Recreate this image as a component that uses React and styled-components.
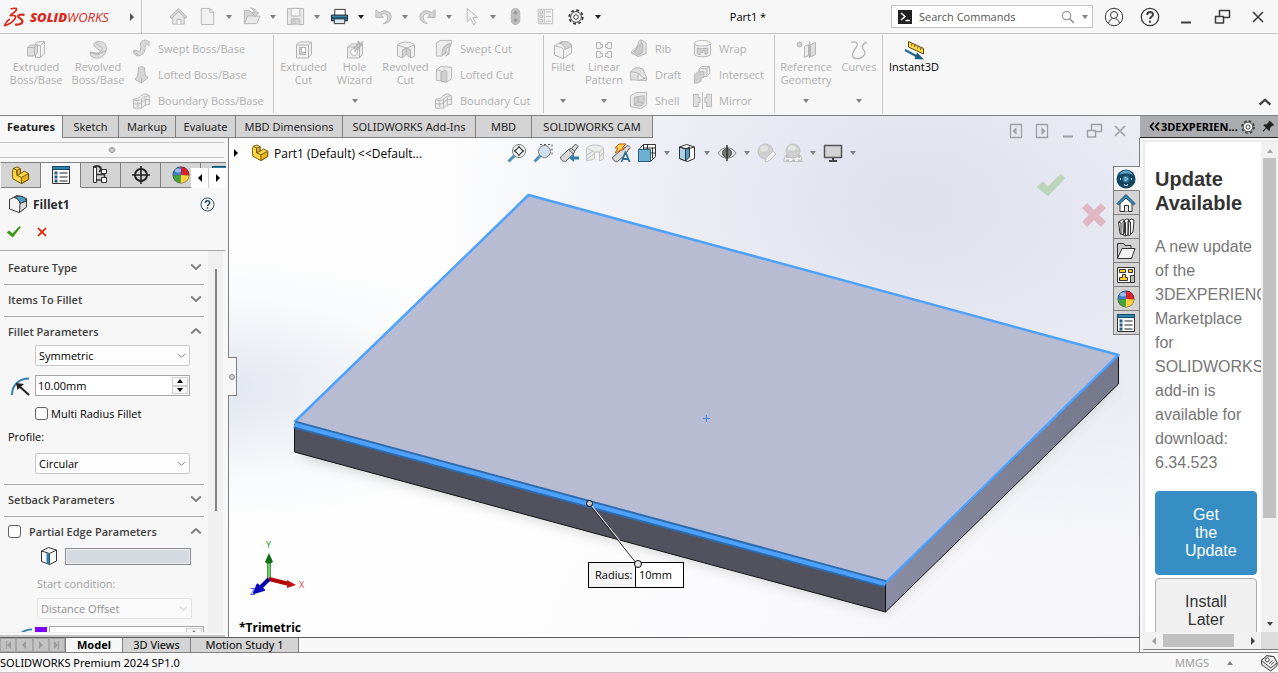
import React from "react";
import styled, { createGlobalStyle, css } from "styled-components";

const sans = `"Open Sans", "Noto Sans", sans-serif`;
const wide = `"Noto Sans", "Open Sans", sans-serif`;
const line = "#808080";
const soft = "#c4c4c4";
const chrome = "#f7f7f7";
const muted = "#b0b0b0";

const GlobalStyle = createGlobalStyle`
  * { box-sizing: border-box; }
  body { margin: 0; background: ${chrome}; font-family: ${sans}; font-size: 11px; color: #000; }
  button, input, select { font: inherit; color: inherit; }
  button { border: 0; padding: 0; background: none; }
  h1, h2, h3, p { margin: 0; }
`;

/* ---------- shell ---------- */
const Shell = styled.div`
  display: flex;
  flex-direction: column;
  height: 100vh;
  background: ${chrome};
  overflow: hidden;
`;
const Body = styled.div`
  flex: 1;
  min-height: 0;
  display: flex;
`;
const Main = styled.main`
  flex: 1;
  min-width: 0;
  display: flex;
  flex-direction: column;
  background:
    radial-gradient(ellipse 42% 66% at 80% 16%, rgba(219, 223, 235, 0.95), rgba(228, 231, 241, 0.7) 50%, rgba(240, 242, 248, 0) 100%),
    radial-gradient(ellipse 30% 26% at 18% 51%, rgba(221, 226, 237, 0.9), rgba(240, 243, 248, 0.4) 65%, rgba(255, 255, 255, 0) 100%),
    radial-gradient(ellipse 30% 50% at 100% 36%, rgba(222, 225, 235, 0.6), rgba(250, 250, 253, 0) 100%),
    radial-gradient(ellipse 60% 60% at 100% 100%, #f4f4f9, #fefefe 100%);
`;
const Middle = styled.div`
  flex: 1;
  min-height: 0;
  display: flex;
`;

/* ---------- icons ---------- */
const Glyph = styled.svg`
  display: block;
  flex: none;
  overflow: visible;
  fill: none;
  stroke: ${(p) => p.$color || "currentColor"};
  stroke-width: ${(p) => p.$weight || 1};
  stroke-linejoin: round;
`;
const G = "#b5b5b5";
const L = "#e9e9e9";
const M = "#d4d4d4";

const art = {
  home: <g stroke={G}><path fill={L} d="M4 10v8h12v-8l-6-6z" /><path fill="#fff" d="M8.500 18v-5h4v5" /><path fill={M} d="M1 10.500 10 1.500l9 9-1.500 1.500L10 5l-7.500 7z" /></g>,
  page: <path stroke={G} fill="#f1f1f1" d="M3.500 1.500h9l4 4v13h-13zM12.500 1.500v4h4" />,
  open: <g stroke={G}><path fill={M} d="M2.500 17.500v-14h5l2 2h5v3" /><path fill={L} d="M2.500 17.500 6 9.500h13l-3.500 8z" /><path fill={M} d="M9 1c4 0 6 2 6 5h2.500L14 10l-3.500-4H13c0-2-1.500-3.500-4-5z" /></g>,
  save: <g stroke={G}><path fill={L} d="M1.500 1.500h17v17h-17z" /><path fill="#f7f7f7" d="M5.500 1.500h9v8h-9z" /><path fill={M} d="M5.500 18.500v-6h9v6" /><path fill="#fff" d="M7.500 14.500h2v3h-2z" /></g>,
  print: <g><path stroke="#333" fill="#fff" d="M5 9V2.500h11V9" /><path stroke="#222" fill="#3e87ab" d="M1.500 8.500h17v6h-17z" /><path stroke="#15597c" d="M2 11.500h16" strokeWidth="2" /><path stroke="#333" fill="#dceaf2" d="M4.500 12.500h11v5h-11z" /></g>,
  undo: <path stroke={G} fill={M} d="M2 3v8h8L7.500 8c3-2 7-.500 7 3s-2 5-4.500 6.500c5-.500 8-3.500 8-7.500 0-5.500-7.500-8-12.500-4z" />,
  redo: <path stroke={G} fill={M} d="M18 3v8h-8l2.500-3c-3-2-7-.500-7 3s2 5 4.500 6.500c-5-.500-8-3.500-8-7.500 0-5.500 7.500-8 12.500-4z" />,
  cursor: <path stroke={G} fill="#f5f5f5" d="M5.500 1.500v14l3.500-3.500 3 6.500 2.500-1.500-3-6h5z" />,
  signal: <g stroke={G}><rect x="5.500" y="1.500" width="9" height="17" rx="4.500" fill="#bdbdbd" /><path stroke="#969696" strokeWidth="1.500" d="M10 4v4M8 6h4M10 12v4M8 14h4" /></g>,
  list: <g stroke={G}><path fill="#f3f3f3" d="M1.500 1.500h17v17h-17zM8.500 1.500v17M10.500 4.500h6M10.500 10h6M10.500 15.500h6" /><path d="M3.500 3.500h3v3h-3zM3.500 8.500h3v3h-3zM3.500 13.500h3v3h-3z" /></g>,
  gear: <g><circle cx="10" cy="10" r="7.500" stroke="#3a3a3a" strokeWidth="2" strokeDasharray="3.200 2.690" /><circle cx="10" cy="10" r="6" stroke="#3a3a3a" fill="#ededed" /><circle cx="10" cy="10" r="2.500" stroke="#3a3a3a" fill="#fff" /></g>,
  user: <g><circle cx="10" cy="10" r="8.700" /><circle cx="10" cy="8" r="3.500" /><path d="M4.500 16.500c.500-3 2.500-4.500 4-5M15.500 16.500c-.500-3-2.500-4.500-4-5" /></g>,
  help: <g><circle cx="10" cy="10" r="8.700" strokeWidth="1.300" /><path strokeWidth="2" d="M7.200 8c0-4 5.800-3.800 5.800-.500 0 2-3 2.500-3 4.500M10 13.800v2" /></g>,
  minimize: <path strokeWidth="2" d="M5 15.500h10" />,
  restore: <g><path d="M7.500 9V3.500h10v7H12" strokeWidth="1.500" /><path d="M3.500 9.500h8v6.500h-8z" strokeWidth="1.500" /></g>,
  close: <path strokeWidth="1.600" d="m5 5 10 10M15 5 5 15" />,
  extrude: <g stroke={G}><path fill="#f2f2f2" d="M9.500 3.500 13 1.500h5.500v12l-4 4h-5z" /><path d="M14.500 5.500v12M9.500 5.500h5l4-4" /><path fill="#dedede" d="m1.500 7.500 3-2.500h7v7.500l-3 3.500h-7zM1.500 7.500h7v8.500M8.500 7.500l3-2.500" /></g>,
  revolve: <g stroke={G}><path fill="#dedede" d="M8 2c7-2 12 3 10 9-2 7-10 9-15 5l-1-4 5 1c5 1 6-1 4-3L6 6c-1-2 0-3 2-4z" /><path d="M8 2c-1 4 8 3 6 8-1 3-6 4-12 3M18 11c-4 0-6 4-11 4" /></g>,
  sweep: <path stroke={G} fill="#d8d8d8" d="M9 5c0-4 6-5 9-2v4c-3-3-4-1-4 2 0 7-6 10-10 8-2-1-3-3-2-5 3-1 4 1 5 1 4 0 1-4 2-8zM2 12c0 3 3 2 4 5" />,
  loft: <path stroke={G} fill="#d6d6d6" d="M7 2.500q3-1.500 6 0l1 9 3 2-7 5.500-7-4 3-3.500zM10 19V14" />,
  boundary: <g stroke={G}><path fill="#ececec" d="M1.500 9c2-2 4 0 6-2s4-4 7-4l4 2v9c-3 0-5 1-7 3s-6 1-10 1z" /><path d="M1.500 9c4 2 7 1 9-1s5-3 8-3M10 9v9M1.500 13c5 2 8 0 10-2s4-2 7-2M6 11v6M14 7v8" /></g>,
  extrudeCut: <g stroke={G}><path fill="#f0f0f0" d="m2.500 5 3-3h12v12l-3 4h-12zM2.500 5h12v13M14.500 5l3-3" /><path fill="#d0d0d0" d="M5.500 7.500h6v7h-6z" /><path fill="#fff" d="M7.500 7.500h4v5h-4z" /></g>,
  hole: <g stroke={G}><path fill="#ececec" d="m2.500 7 4-3h11v10l-3 4h-12zM2.500 7h12v11" /><circle cx="9" cy="12" r="3.500" fill="#fff" /><path d="M9 12 18 1.500M13 1l1 3 4 1M9 8l6-6M12 10l5-6" strokeWidth="1.500" /></g>,
  revolveCut: <g stroke={G}><path fill="#ececec" d="M1.500 5c4-4 13-4 17 0v11l-4 2V10l-4-2-4 2v8l-5-2zM1.500 5l9 3 8-3" /><path fill="#d2d2d2" d="M6.500 10v8l4-4V8zM10.500 8v6l4 4v-8z" /></g>,
  sweepCut: <g stroke={G}><path fill="#ececec" d="m2.500 4 4-2.500h12V5c-6 0-6 5-6 8l-4 5h-6z" /><path fill="#cfcfcf" d="M8.500 17c-1-7 3-12 9-12v3c-4 0-5 3-5 7zM16 8v8l-4 2" /></g>,
  loftCut: <g stroke={G}><path fill="#ececec" d="m2.500 5 5-3.500 11 1v12l-5 3.500-11-2z" /><path fill="#cfcfcf" d="M7.500 8l4-3 2 2v11l-6-1z" /><path d="M2.500 5l5 1.500V17" /></g>,
  fillet: <g stroke={G}><path fill="#f2f2f2" d="M1.500 6 9 1.500l9.500 3V13L10 18.500 1.500 15z" /><path fill="#d4d4d4" d="M6 3.500 12 1.500c4 0 6 2 6.500 5L12 9.500c0-3-3-6-6-6z" /><path d="M1.500 6l5 1c3 0 4 2 4 4v7.500" /></g>,
  pattern: <path stroke={G} fill="#f0f0f0" d="M2.500 2.500h4v2h2v3h-2v1h-4zM11.500 4.500h2v-2h4v6h-4v-1h-2zM2.500 11.500h4v2h2v3h-2v1h-4zM11.500 13.500h2v-2h4v6h-4v-1h-2z" />,
  rib: <g stroke={G}><path fill="#e4e4e4" d="M2 14 8 8.500l3-7 2-.500 5 3v11l-8 3.500z" /><path fill="#c9c9c9" d="M5 13.500 12.500 4l2 1v9.500l-5 2z" /><path d="M2 14l8 4.500M13 1v4" /></g>,
  draft: <g stroke={G}><path fill="#dedede" d="m1.500 7 6-4.500 7 1.500 4 9v3.500l-17-1z" /><path d="m1.500 7 8 1.500 8 6.500M9.500 8.500v8l9-3.500" fill="#efefef" /></g>,
  shell: <g stroke={G}><path fill="#ececec" d="m1.500 5 6-3.500h11v13l-6 4-11-2z" /><path fill="#d0d0d0" d="M5.500 6.500 16 5v8l-4 3-6.500-1z" /><path d="M5.500 15l4-4 6 2M9.500 11V6" /></g>,
  wrap: <g stroke={G}><path fill="#ececec" d="M1.500 4.500v12c3 3 14 3 17 0v-12" /><ellipse cx="10" cy="4.500" rx="8.500" ry="3" fill="#f5f5f5" /><path fill="#cfcfcf" d="M4.500 9.500c4 1 7 1 11 0v6l-3 .500v-4h-2v2h-3v2.500l-3-1z" /></g>,
  intersect: <g stroke={G}><path fill="#ececec" d="m6.500 4 3-2.500h8V9l-3 3h-8z" /><path fill="#cfcfcf" d="m1.500 10 4-3h6v6l-3 1v3l-4 2h-3z" /><path d="M6.500 4h8v8M14.500 4l3-2.500" /></g>,
  mirror: <path stroke={G} fill="#dedede" d="M.500 3.500h5V7h2v5h-2v4.500h-5zM19.500 3.500h-5V7h-2v5h2v4.500h5zM10 1v18" />,
  geometry: <g stroke={G}><circle cx="3.500" cy="4.500" r="2.500" fill="#d0d0d0" /><path fill="#ececec" d="M8.500 6.500l4-2v11l-4 2z" /><path fill="#dedede" d="m14.500 4.500 5-2v12l-5 2.500zM13.500 1v17" /></g>,
  curves: <path stroke={G} strokeWidth="1.300" d="M2 2.500c5-2 8 1 5 5s-6 10 0 11 11-5 8-8-2-7 3-8" />,
  instant: <g><path stroke="#5a4a08" fill="#ffd84a" d="m4.500 1.500 15 7v5.500l-15-7z" /><path stroke="#5a4a08" d="m8 3.500-.500 2M11 5l-.500 2M14 6.500l-.500 2M17 8l-.500 2" /><path stroke="#25688f" strokeWidth="2" d="m1 10 13 7" /><path stroke="none" fill="#1d5b80" d="m13 12.500 7 7-9.500-.500z" /></g>,
  part: <g stroke="#6b5200"><path fill="#ffd84a" d="m1.500 6.500 1-4 4-1.500L10 3v5l4-2.500 4.500 2.500v6L11 18.500l-9-5z" /><path fill="#e9b21e" d="M6 4.500 10 3v5l-3.500 2zM11 12l7.500-4v6L11 18.500z" /><path d="M2.500 2.500 6 4.500 6.500 10l4.500 2" /></g>,
  sheet: <g><path stroke="#333" fill="#fff" d="M1.500 1.500h17v17h-17z" /><path fill="#2f83ad" stroke="#174a66" d="M1.500 1.500h17v3h-17z" /><path stroke="#222" d="M8.500 8h8M8.500 12h8M8.500 16h8" /><path stroke="none" fill="#235c7d" d="M3.500 6.500h3v3h-3zM3.500 10.500h3v3h-3zM3.500 14.500h3v3h-3z" /></g>,
  config: <g stroke="#333"><path fill="#fff" d="M2.500 2.500h3v15h-3zM10.500 4.500h5v4h-5zM10.500 12.500h5v5h-5z" /><path d="M5.500 9.500h8M13.500 8.500v4M5.500 15h5" strokeWidth="1.500" /><path d="M2 2.500c4-3 8-1 8 2l-1.500 2.500" strokeWidth="2" /></g>,
  target: <g stroke="#222"><circle cx="10" cy="10" r="6" strokeWidth="2" /><path strokeWidth="1.600" d="M10 1v18M1 10h18" /></g>,
  ball: <g stroke="none"><circle cx="10" cy="10" r="8.500" fill="#3c3c3c" /><path fill="#3b7fd4" d="M10 10 10 2A8 8 0 0 0 2 10.500z" /><path fill="#d8232a" d="M10 10V2a8 8 0 0 1 8 8.500z" /><path fill="#45a33c" d="M10 10 2 10.500A8 8 0 0 0 9.500 18z" /><path fill="#ffd23b" d="m10 10 8 .500A8 8 0 0 1 9.500 18z" /><ellipse cx="7" cy="5.500" rx="3" ry="2" fill="#fff" opacity=".5" /></g>,
  filletBlue: <g stroke="#3a3a3a"><path fill="#f4f4f4" d="M1.500 5.500 9 1.500l9.500 3V13L11 18.500 1.500 15z" /><path fill="#4a9cc4" d="M6 3.500 11 2c4 0 7 2 7.500 5L12 9.500C11.500 6 9 4 6 3.500z" /><path fill="#dcdcdc" d="M12 9.500 18.500 7v6L11.500 18.500z" /></g>,
  check: <path stroke="none" fill="#3c9a12" d="M1 10.500 4 8l4 4 9-9.500 1.500 1.500L8.500 17z" />,
  bigCheck: <path stroke="none" fill="currentColor" d="m.500 11.500 4-4L8 11l8.500-8.500 3 3L8 17.500z" />,
  cross: <path stroke="#e02200" strokeWidth="2.800" d="m3.500 3.500 13 13M16.500 3.500l-13 13" />,
  radius: <g><path stroke="#2f7fa8" strokeWidth="2" d="M2 19C2 9 9 2.500 19 2.500" /><path stroke="#222" strokeWidth="2" d="m8 9 11 10" /><path stroke="none" fill="#222" d="m6 7 8 1-6.500 6z" /></g>,
  edge: <g stroke="#333"><path fill="#fff" d="m2.500 5 7-3.500 8 2.500v11l-7 3.500-8-3zM2.500 5l8 2.500v11M10.500 7.500l7-3.500" /><path stroke="none" fill="#2f7fa8" d="M7.500 7h3v11h-3z" /></g>,
  zoomFit: <g><circle cx="12" cy="8" r="6.500" stroke="#777" fill="#f3f7fa" /><path stroke="#333" strokeWidth="1.200" d="m10 6 2-2.500L14 6M10 10l2 2.500 2-2.500M10 6 7.500 8l2.500 2M14 6l2.500 2-2.500 2" /><path stroke="#4f8fb3" strokeWidth="3" d="m1.500 18.500 6-6" /></g>,
  zoomArea: <g><path stroke="#555" strokeDasharray="2 2" d="M7 1.500h12v12" /><circle cx="11.500" cy="8.500" r="6" stroke="#777" fill="#cfe2ef" /><path stroke="#4f8fb3" strokeWidth="3" d="m1.500 18.500 6-6" /></g>,
  prevView: <g><path stroke="#555" fill="#d9d9d9" d="m1.500 14 8-7.500 3-1 4-4.500 2.500 2.500-3.500 5-1 2.500-8 7.500c-3 0-4.500-1-5-4.500z" /><path stroke="#555" d="m9.500 6.500 5 4.500M12.500 5.500l3.500 3" /><path stroke="none" fill="#2f7fa8" d="m10 15 5-4v2.500h5v3h-5V19z" /></g>,
  section: <g stroke="#c4c4c4"><path fill="#ececec" d="M1.500 5c3-4 14-4 17 0v11l-4 2V9h-5v7l-8 2z" /><path d="M1.500 5c2 2 6 2 8 4M14.500 9l4-4M2 12l6-4M2 16l7-5M15 13l3-3" /></g>,
  style: <g><path stroke="#555" fill="#d9d9d9" d="m1.500 14.500 8-7 3-1 4-4.500 2.500 2.500-3.500 5-1 2-8 7c-3 0-4.500-1-5-4z" /><path stroke="#c4601a" fill="#ffcf55" d="M8 1h7l-4 4h3L4 10l3-5H4z" /><path stroke="#2f6f93" strokeWidth="1.800" d="m10.500 19 4-10 4 10M12 16h5" /></g>,
  orient: <g><path stroke="#333" fill="#fff" d="m1.500 7 5-5.500h12v12l-5 5M6.500 1.500v5M10.500 1.500v5M6.500 5h12M15.500 4.500v11M13.500 10h5" /><path stroke="#26607f" fill="#6db1d1" d="M1.500 6.500h12v12h-12z" /></g>,
  display: <g stroke="#333"><path fill="#fff" d="m2.500 4 7-2.500 8 2.500v11.500l-7 3-8-3z" /><path fill="#a9d4e8" d="m2.500 4 6 2v12l-6-2.500z" /><path fill="#4f9dc3" d="m8.500 6 4-2v10l-4 4z" /><path d="m2.500 4 8 2 7-2" /></g>,
  eye: <g><path stroke="#888" fill="#e0e0e0" d="M1 10c4-7 14-7 18 0-4 7-14 7-18 0z" /><circle cx="10" cy="10" r="4.500" fill="#777" stroke="#555" /><path stroke="#333" strokeWidth="1.500" d="M10 2v16" /></g>,
  appearance: <g stroke="#c0c0c0"><circle cx="8.500" cy="8.500" r="7.500" fill="#cfcfcf" /><ellipse cx="7" cy="5.500" rx="4" ry="3" fill="#e4e4e4" stroke="none" /><path fill="#f0f0f0" d="m8 19 1-4 7-7 3 3-7 7z" /></g>,
  scene: <g stroke="#c0c0c0"><path fill="#f0f0f0" d="M2.500 12.500h15l2 6h-19z" /><path strokeWidth="2" strokeDasharray="3 3" d="M3 14h14M3 17.500h15" /><circle cx="10" cy="8" r="7" fill="#cfcfcf" /><ellipse cx="9" cy="5" rx="4" ry="2.500" fill="#e6e6e6" stroke="none" /></g>,
  monitor: <g><path stroke="#555" strokeWidth="1.500" fill="#d3d3d3" d="M1.500 2.500h17v12h-17z" /><path stroke="#444" strokeWidth="2" d="M10 15v3M6 18h8" /></g>,
  compass: <g stroke="none"><circle cx="10" cy="10" r="9.500" fill="#15445f" /><path fill="#5a9fc4" d="M3 6C6-.500 14-.500 17 6c-4-2-10-2-14 0z" /><circle cx="10" cy="10" r="3.500" fill="#2f7298" /><path stroke="#a9d4ea" fill="none" d="m9 8 3 2-3 2zM4.500 9v2M15.500 9v2M8.500 15v1.500h3V15" /></g>,
  homeBlue: <g><path stroke="#333" fill="#fff" d="M4 10v8.500h12V10l-6-6z" /><path stroke="#333" fill="#e8e8e8" d="M8.500 18.500v-6h4v6" /><path stroke="#174a66" fill="#3a8db7" d="M1 10.500 10 1.500l9 9-1.500 1.500L10 5l-7.500 7z" /></g>,
  books: <g stroke="#333"><path fill="#f4f4f4" d="m2.500 5 4-2.500 2 .500v12l-1 3-3.500-1.500zM7 4.500 10.500 2l2.500.500L12 18l-3 1-1.500-1zM12 4l3.500-2L18 3l-1 12-3.500 3.500-1.500-.500z" /><path d="m2.500 5 2.500 1v11.500M7 4.500l2.500 1V19M12 4l2.500 1v13" /></g>,
  folder: <g stroke="#333"><path fill="#c9c9c9" d="M1.500 17.500v-15h6l1.500 2h6v3" /><path fill="#f4f4f4" d="M1.500 17.500 6 7.500h13l-3.500 10z" /></g>,
  palette: <g stroke="#333"><path fill="#fff" d="M1.500 2.500h17v15h-17z" /><path fill="#ffc928" d="M3.500 4.500h6v3h-6zM12.500 4.500h4v3h-4zM6.500 9.500h3v3h2v3h-8v-3h3z" /><path fill="#bbb" d="M14.500 10.500h4v7h-4z" /></g>,
  tags: <g stroke="#333"><path fill="#e4e4e4" d="m1.500 7 6-5 8 1 3.500 7v3l-7 6-10-7z" /><path fill="#f6f6f6" d="m1.500 7 6-5 8 1 3.500 7-7 5.500z" /><circle cx="8" cy="6.500" r="2.200" fill="#fff" /><path d="m10 11 4-4M12 12l4-3.500" /></g>,
  paneLeft: <g><path d="M4.500 3.500h11v13h-11z" strokeWidth="1.300" /><path stroke="none" fill="currentColor" d="M10.500 6v8l-4-4z" /></g>,
  paneRight: <g><path d="M4.500 3.500h11v13h-11z" strokeWidth="1.300" /><path stroke="none" fill="currentColor" d="M9.500 6v8l4-4z" /></g>,
  pin: <path stroke="none" fill="#222" d="m12 1 7 7-2 1-1-.500-4 4 .500 3-1.500 1.500-4-4L2 18l-1-1 5-5-4-4L3.500 6.500l3 .500 4-4L10 2z" />,
  chevrons: <path strokeWidth="2.500" d="m9 4-5.500 6L9 16M17 4l-5.500 6 5.500 6" />,
  up: <path strokeWidth="2.500" d="m4 13 6-5.500L16 13" />,
  down: <path strokeWidth="2.500" d="m4 7 6 5.500L16 7" />,
  thinDown: <path strokeWidth="1.600" d="m2 6 8 8 8-8" />,
  search: <g><circle cx="8" cy="8" r="6" strokeWidth="1.500" /><path strokeWidth="2" d="m12.500 12.500 6 6" /></g>,
  flatX: <path stroke="none" fill="currentColor" d="M6 3 10 7l4-4 3 3-4 4 4 4-3 3-4-4-4 4-3-3 4-4-4-4z" />,
};
const Icon = ({ name, size = 20, color }) => (
  <Glyph viewBox="0 0 20 20" width={size} height={size} $color={color} aria-hidden="true">{art[name]}</Glyph>
);
const Caret = styled.span`
  flex: none;
  width: 0;
  height: 0;
  border: solid transparent;
  ${(p) =>
    ({
      down: css`border-width: 4px 3px 0; border-top-color: ${p.$color || "#808080"};`,
      up: css`border-width: 0 3px 4px; border-bottom-color: ${p.$color || "#808080"};`,
      left: css`border-width: 4px 4px 4px 0; border-right-color: ${p.$color || "#808080"};`,
      right: css`border-width: 4px 0 4px 4px; border-left-color: ${p.$color || "#808080"};`,
    })[p.$dir || "down"]}
`;

/* ---------- title bar ---------- */
const TitleBar = styled.header`
  display: flex;
  align-items: center;
  flex: none;
  height: 34px;
  padding-right: 2px;
  border-bottom: 1px solid ${soft};
`;
const Brand = styled.div`
  display: flex;
  align-items: center;
  gap: 4px;
  width: 142px;
  height: 33px;
  padding: 0 7px 0 4px;
  border-right: 1px solid ${soft};
  color: #d9291c;
`;
const BrandName = styled.span`
  flex: 1;
  font: italic 400 13px/16px "Open Sans", sans-serif;
  b { font-weight: 800; }
`;
const Tools = styled.nav`
  display: flex;
  align-items: center;
  padding-left: ${(p) => p.$inset || 0}px;
`;
const ToolButton = styled.button`
  display: flex;
  align-items: center;
  justify-content: center;
  width: ${(p) => p.$w || 28}px;
  height: 28px;
  color: #3c3c3c;
`;
const DocTitle = styled.h1`
  flex: 1;
  text-align: center;
  font-size: 11px;
  font-weight: 400;
`;
const SearchBox = styled.label`
  display: flex;
  align-items: center;
  gap: 7px;
  width: 202px;
  height: 23px;
  margin-right: 3px;
  padding: 0 4px 0 6px;
  border: 1px solid ${soft};
  background: #fff;
  color: #8a8a8a;
  input {
    flex: 1;
    min-width: 0;
    padding: 0;
    border: 0;
    outline: 0;
    background: none;
    color: #555;
    &::placeholder { color: #555; opacity: 1; }
  }
`;

/* ---------- ribbon ---------- */
const Ribbon = styled.section`
  display: flex;
  flex: none;
  height: 82px;
  border-bottom: 1px solid ${line};
`;
const Group = styled.div`
  display: flex;
  width: ${(p) => p.$w}px;
  height: 78px;
  margin-top: 1px;
  padding-left: ${(p) => p.$inset || 0}px;
  border-right: 1px solid ${soft};
  &:last-of-type { border: 0; }
`;
const Command = styled.button`
  display: flex;
  flex-direction: column;
  align-items: center;
  width: ${(p) => p.$w}px;
  padding-top: 5px;
  color: ${(p) => (p.$on ? "#000" : muted)};
  line-height: 13px;
  white-space: nowrap;
  span { height: 26px; }
  i { margin-top: 13px; }
`;
const Stack = styled.div`
  display: flex;
  flex-direction: column;
  width: ${(p) => p.$w}px;
  padding-left: 3px;
`;
const SmallCommand = styled.button`
  display: flex;
  align-items: center;
  gap: 7px;
  height: 26px;
  color: ${muted};
  white-space: nowrap;
`;
const RibbonEnd = styled.button`
  margin-left: auto;
  align-self: flex-end;
  padding: 0 4px 4px 0;
  color: #3c3c3c;
`;

/* ---------- tab rows ---------- */
const TabRow = styled.div`
  display: flex;
  flex: none;
  height: 22px;
`;
const Tab = styled.button`
  width: ${(p) => p.$w}px;
  height: 22px;
  border-right: 1px solid ${line};
  border-bottom: 1px solid ${(p) => (p.$on ? chrome : line)};
  background: ${(p) => (p.$on ? chrome : "#d4d4d4")};
  font-family: ${wide};
  font-weight: ${(p) => (p.$on ? 700 : 400)};
  color: #1e1e1e;
  white-space: nowrap;
`;
const DocButtons = styled.div`
  display: flex;
  gap: 6px;
  margin: 5px 10px 0 auto;
  color: #a0a0a4;
`;

/* ---------- property panel ---------- */
const Panel = styled.aside`
  position: relative;
  z-index: 1;
  display: flex;
  flex-direction: column;
  flex: none;
  width: 229px;
  border-right: 1px solid ${line};
  background: ${chrome};
`;
const Grip = styled.div`
  display: flex;
  align-items: center;
  justify-content: center;
  height: 16px;
  margin: 4px 4px 4px 0;
  border: solid ${soft};
  border-width: 1px 0;
`;
const Dot = styled.span`
  width: 6px;
  height: 6px;
  border: 1px solid #8c8c8c;
  border-radius: 50%;
  background: #d0d0d0;
`;
const PanelTabs = styled.div`
  position: relative;
  display: flex;
  height: 26px;
  margin: 0 2px 0 1px;
  overflow: hidden;
`;
const PanelTab = styled.button`
  display: flex;
  align-items: center;
  justify-content: center;
  flex: none;
  width: 40px;
  border: solid ${line};
  border-width: 1px 1px 1px 0;
  background: #d4d4d4;
  ${(p) => p.$on && css`background: ${chrome}; border-bottom-color: ${chrome};`}
`;
const TabArrows = styled.div`
  position: absolute;
  right: 0;
  bottom: 0;
  display: flex;
  gap: 1px;
  background: #ccc;
  button {
    display: flex;
    align-items: center;
    justify-content: center;
    width: 17px;
    height: 20px;
    background: #fff;
  }
`;
const FeatureHead = styled.div`
  display: flex;
  align-items: center;
  gap: 5px;
  height: 32px;
  padding: 0 13px 0 8px;
  h2 { flex: 1; font-size: 12px; font-weight: 700; color: #2a2a2a; }
  button { color: #2d4a5a; }
`;
const Confirm = styled.div`
  display: flex;
  align-items: center;
  gap: 14px;
  height: 31px;
  margin-right: 3px;
  padding: 0 0 7px 6px;
  border-bottom: 1px solid #a8a8a8;
`;
const Scroller = styled.div`
  display: flex;
  flex: 1;
  min-height: 0;
  overflow: hidden;
`;
const Sections = styled.div`
  flex: 1;
  min-width: 0;
  padding: 2px 4px 0;
`;
const Track = styled.div`
  flex: none;
  width: 15px;
  margin-right: 5px;
  padding: 18px 6px 0 7px;
  background: #f0f0f0;
  &::before { content: ""; display: block; height: 242px; background: #858585; }
`;
const Section = styled.section`
  padding-bottom: ${(p) => p.$pad || 3}px;
  border-bottom: 1px solid #a8a8a8;
`;
const SectionHead = styled.div`
  display: flex;
  align-items: center;
  gap: 8px;
  height: 28px;
  padding-left: 4px;
  h3, label { flex: 1; font-size: 11px; font-weight: 600; color: #404040; white-space: nowrap; }
  button { color: #808080; }
`;
const Field = styled.div`
  display: flex;
  align-items: center;
  gap: ${(p) => p.$gap || 5}px;
  height: ${(p) => p.$h || 18}px;
  margin-top: ${(p) => p.$top || 0}px;
  padding-left: ${(p) => p.$inset || 4}px;
  color: ${(p) => (p.$off ? "#a0a0a0" : "#000")};
`;
const SelectWrap = styled.div`
  position: relative;
  flex: none;
  width: 155px;
  color: ${(p) => (p.$off ? "#b0b0b0" : "#555")};
  svg { position: absolute; top: 6px; right: 4px; pointer-events: none; }
`;
const Select = styled.select`
  appearance: none;
  display: block;
  width: 100%;
  height: 21px;
  padding: 0 3px;
  border: 1px solid #c8c8c8;
  border-radius: 2px;
  background: #fdfdfd;
  color: #000;
  &:disabled { color: #909090; background: #fafafa; border-color: #e2e2e2; opacity: 1; }
`;
const Check = styled.input`
  appearance: none;
  width: 13px;
  height: 13px;
  margin: 0;
  border: 1px solid #606060;
  border-radius: 3px;
  background: #fdfdfd;
`;
const Spin = styled.div`
  display: flex;
  flex: none;
  width: 155px;
  height: 21px;
  padding: 1px;
  border: 1px solid #a5a5a5;
  background: #fff;
  input { flex: 1; min-width: 0; padding: 0 1px; border: 0; background: none; }
`;
const SpinButtons = styled.div`
  display: flex;
  flex-direction: column;
  width: 16px;
  button {
    flex: 1;
    display: flex;
    align-items: center;
    justify-content: center;
    border: 1px solid #d0d0d0;
    background: #f7f7f7;
  }
`;
const EdgeList = styled.div`
  width: 126px;
  height: 17px;
  border: 1px solid #8a8a92;
  background: #d5d9e0;
  box-shadow: inset 0 0 0 1px #eee;
`;
const Swatch = styled.span`
  width: 13px;
  height: 20px;
  background: #8000ff;
`;
const Splitter = styled.div`
  height: 5px;
  margin-right: 3px;
  border-top: 1px solid #f0f0f0;
  border-bottom: 2px solid ${soft};
`;
const Handle = styled.button`
  position: absolute;
  top: 219px;
  left: 228px;
  display: flex;
  align-items: center;
  justify-content: center;
  width: 9px;
  height: 39px;
  border: 1px solid ${line};
  border-left: 0;
  background: ${chrome};
`;

/* ---------- graphics area ---------- */
const Viewport = styled.section`
  position: relative;
  flex: 1;
  min-width: 0;
  border-right: 1px solid ${line};
`;
const Canvas = styled.svg`
  position: absolute;
  inset: 0;
  width: 100%;
  height: 100%;
  overflow: hidden;
`;
const ViewBar = styled.div`
  position: relative;
  display: flex;
  align-items: center;
  height: 30px;
`;
const TreeRoot = styled.div`
  display: flex;
  align-items: center;
  width: 275px;
  padding-left: 5px;
  font-size: 12px;
  white-space: nowrap;
  svg { margin: 0 5px 0 13px; }
`;
const Slot = styled.button`
  display: flex;
  align-items: center;
  justify-content: center;
  width: ${(p) => (p.$caret ? 14 : 26)}px;
  height: 24px;
`;
const Callout = styled.label`
  position: absolute;
  left: 359px;
  top: 424px;
  display: flex;
  width: 96px;
  height: 26px;
  border: 1px solid #000;
  background: #f4f4f4;
  line-height: 24px;
  &::before {
    content: "";
    position: absolute;
    left: 45px;
    top: -3px;
    width: 6px;
    height: 6px;
    border: 1px solid #000;
    border-radius: 50%;
    background: #eee;
  }
  span { width: 46px; padding-left: 6px; white-space: nowrap; }
  input { flex: 1; min-width: 0; padding: 0 3px; border: 0; border-left: 1px solid #000; background: #fff; }
`;
const Confirmation = styled.button`
  position: absolute;
  top: ${(p) => p.$top}px;
  right: ${(p) => p.$right}px;
  opacity: 0.24;
  color: ${(p) => p.$color};
`;
const ViewName = styled.strong`
  position: absolute;
  left: 10px;
  bottom: 1px;
  font-size: 12px;
  line-height: 17px;
`;
const SideTabs = styled.nav`
  position: absolute;
  top: 28px;
  right: -1px;
  width: 27px;
  border: solid ${line};
  border-width: 1px 0 0 1px;
`;
const SideTab = styled.button`
  display: flex;
  align-items: center;
  justify-content: center;
  width: 100%;
  height: 24px;
  padding-right: 1px;
  border: solid ${line};
  border-width: 0 1px 1px 0;
  background: ${(p) => (p.$on ? "#f7f7f7" : "#d4d4d4")};
  border-right-color: ${(p) => (p.$on ? "#f7f7f7" : line)};
`;

/* ---------- bottom ---------- */
const ViewTabs = styled.div`
  display: flex;
  flex: none;
  height: 15px;
  border-top: 1px solid #5c5c5c;
  border-right: 1px solid ${line};
  background: ${chrome};
`;
const ViewTab = styled.button`
  width: ${(p) => p.$w}px;
  border-right: 1px solid ${line};
  background: ${(p) => (p.$on ? chrome : "#d4d4d4")};
  font-family: ${wide};
  font-weight: ${(p) => (p.$on ? 700 : 400)};
  line-height: 12px;
  white-space: nowrap;
`;
const Pager = styled.div`
  display: flex;
  width: 66px;
  border-right: 1px solid ${line};
  button {
    flex: 1;
    display: flex;
    align-items: center;
    justify-content: center;
    border: 1px solid #a6a6a6;
    background: #c2c2c2;
  }
  i { width: 1px; height: 8px; background: #999; }
`;
const Status = styled.footer`
  display: flex;
  align-items: center;
  flex: none;
  height: 21px;
  border-top: 1px solid ${line};
  border-bottom: 1px solid #c9bfc4;
  font-family: ${wide};
  span { flex: 1; }
  small { margin-right: 18px; font-size: 11px; color: #a0a0a0; }
  i { margin-right: 27px; }
`;

/* ---------- task pane ---------- */
const TaskPane = styled.aside`
  display: flex;
  flex-direction: column;
  flex: none;
  width: 138px;
  background: ${chrome};
`;
const TaskHead = styled.div`
  display: flex;
  align-items: center;
  flex: none;
  height: 22px;
  padding: 0 3px 0 8px;
  border-bottom: 1px solid #222;
  background: #aaacb0;
  h2 { flex: 1; font-family: ${wide}; font-size: 11px; font-weight: 700; white-space: nowrap; }
  svg + svg { margin-left: 6px; }
`;
const TaskFrame = styled.div`
  flex: 1;
  min-height: 0;
  display: grid;
  grid-template: 1fr 17px / 1fr 17px;
  margin: 2px 0 2px 3px;
  border: solid ${line};
  border-width: 0 0 1px;
  border-top: 2px solid #ececec;
`;
const Article = styled.article`
  min-height: 0;
  min-width: 0;
  overflow: hidden;
  padding: 25px 4px 0 10px;
  border-left: 2px solid #ececec;
  background: #fff;
  font-family: "Liberation Sans", Arial, sans-serif;
  h3 { font-size: 20px; line-height: 24px; font-weight: 700; color: #333; }
  p { margin: 20px 0 16px; font-size: 16px; line-height: 24px; color: #777; }
`;
const UpdateButton = styled.button`
  display: block;
  width: 100%;
  margin-bottom: 3px;
  padding: 14px 29px;
  border: 1px solid ${(p) => (p.$primary ? "#368ec4" : "#adadad")};
  border-radius: 4px;
  background: ${(p) => (p.$primary ? "#368ec4" : "#f0f0f0")};
  color: ${(p) => (p.$primary ? "#fff" : "#333")};
  font-size: 16px;
  line-height: 18px;
`;
const VBar = styled.div`
  display: flex;
  flex-direction: column;
  align-items: center;
  padding: 7px 0 6px;
  background: #f1f1f1;
  &::before { content: ""; order: 1; width: 13px; height: 360px; margin-top: 5px; background: #c1c1c1; }
  i:last-child { order: 2; margin-top: auto; }
`;
const HBar = styled.div`
  display: flex;
  align-items: center;
  padding: 0 6px 0 9px;
  background: #f1f1f1;
  &::before { content: ""; order: 1; width: 71px; height: 13px; margin-left: 7px; background: #c1c1c1; }
  i:last-child { order: 2; margin-left: auto; }
`;
const Corner = styled.div`
  background: #dcdcdc;
`;

const Big = ({ icon, w, children, caret, on }) => (
  <Command $w={w} $on={on}>
    <Icon name={icon} />
    <span>{children}</span>
    {caret && <Caret as="i" />}
  </Command>
);
const Small = ({ icon, children }) => (
  <SmallCommand><Icon name={icon} size={19} />{children}</SmallCommand>
);
const Two = ({ a, b }) => <>{a}<br />{b}</>;

const fileTools = [
  ["page"], ["open"], ["save"], ["print", "#222"], ["undo"], ["redo"], ["cursor"],
];
const tabs = [
  ["Features", 63], ["Sketch", 56], ["Markup", 57], ["Evaluate", 60],
  ["MBD Dimensions", 107], ["SOLIDWORKS Add-Ins", 133], ["MBD", 56], ["SOLIDWORKS CAM", 121],
];
const viewTools = [
  "zoomFit", "zoomArea", "prevView", "section", "style", "orient", null, "display", null,
  "eye", null, "appearance", "scene", null, "monitor", null,
];
const sideTabs = ["compass", "homeBlue", "books", "folder", "palette", "ball", "sheet"];

const Logo = () => (
  <Glyph viewBox="0 0 22 22" width="22" height="22" $weight={1.7} aria-hidden="true">
    <path d="M6.500 3c3-1 6.500-1.200 6 .500-.600 2-3.500 4-6 5.500" />
    <path d="M5.500 9.800c5-1.300 7.500.200 5.300 3.200C8.500 16.200 5 18.500.800 19.700 1.200 17.500 3 15 5.800 12.800" />
    <path d="M20.500 8.800c-3.500-.600-6.800-.200-6.300 1.800.400 1.800 4.300 2.600 4.300 4.600 0 2.600-4 3.800-7.500 3.300" strokeWidth="2.200" />
  </Glyph>
);

const Model = () => (
  <Canvas aria-label="Part1 model">
    <defs>
      <linearGradient id="side" x1="0" y1="1" x2="1" y2="0"><stop offset="0" stopColor="#8a8da3" /><stop offset="1" stopColor="#74768a" /></linearGradient>
      <filter id="shade" x="-10%" y="-10%" width="120%" height="130%"><feGaussianBlur stdDeviation="6" /></filter>
      <linearGradient id="green"><stop offset="0" stopColor="#2b8a2b" /><stop offset="0.500" stopColor="#90e090" /><stop offset="1" stopColor="#2b8a2b" /></linearGradient>
    </defs>
    <g transform="translate(-229 -138)" strokeLinejoin="round">
      <path d="M300 440 886 606 1114 380 1112 390 886 614 304 458z" fill="#777" opacity="0.300" filter="url(#shade)" />
      <path d="M294.500 424V452L885.500 612V584z" fill="#51525e" stroke="#111" />
      <path d="M885.500 584V612L1118.500 384V356z" fill="url(#side)" stroke="#111" />
      <path d="M528.500 195 1118.500 355 885.500 583 294.500 423z" fill="#b8bcd3" />
      <path d="M294.500 422 528.500 195 1118.500 355 885.500 583" fill="none" stroke="#4da2ff" strokeWidth="2.500" />
      <path d="M294.500 424.500 885.500 584" stroke="#2f6cae" strokeWidth="8" />
      <path d="M294.500 424.500 885.500 584" stroke="#4da2ff" strokeWidth="4" />
      <path d="M703 418.500h7M706.500 415v7" stroke="#3d8df0" />
      <path d="m589 504 48 60" stroke="#222" />
      <path d="m590 503.500 48 60" stroke="#fff" />
      <circle cx="589.500" cy="503.500" r="3" fill="#ccc" stroke="#000" />
      <path d="M267 557h4v22h-4z" fill="url(#green)" />
      <path d="m269 553 4 9q-4 3-8 0z" fill="#0c6d14" />
      <path d="m269 579 20 5" stroke="#b30000" strokeWidth="4" />
      <path d="m287 580 9 5-9 3z" fill="#c11212" />
      <path d="m269 579-8 8" stroke="#0000a0" strokeWidth="4" />
      <path d="m264 590-10 3 3.500-8.500z" fill="#0a0ab8" stroke="#0a0ab8" strokeWidth="2" />
      <g fontFamily="Open Sans, sans-serif" fontSize="9">
        <text x="266" y="548" fill="#1a8a1a">Y</text>
        <text x="299" y="588" fill="#f04040">X</text>
        <text x="250" y="595" fill="#3535e8">Z</text>
      </g>
    </g>
  </Canvas>
);

export default function App() {
  return (
    <Shell>
      <GlobalStyle />
      <TitleBar>
        <Brand>
          <Logo />
          <BrandName><b>SOLID</b>WORKS</BrandName>
          <Caret $dir="right" $color="#555" />
        </Brand>
        <Tools $inset={21} aria-label="Standard">
          <ToolButton $w={30} aria-label="Home"><Icon name="home" size={19} /></ToolButton>
          {fileTools.map(([name, color]) => (
            <React.Fragment key={name}>
              <ToolButton aria-label={name}><Icon name={name} size={19} /></ToolButton>
              <ToolButton $w={16} aria-label={`${name} menu`}><Caret $color={color} /></ToolButton>
            </React.Fragment>
          ))}
          <ToolButton aria-label="Rebuild"><Icon name="signal" size={19} /></ToolButton>
          <ToolButton $w={32} aria-label="File properties"><Icon name="list" size={17} /></ToolButton>
          <ToolButton $w={30} aria-label="Options"><Icon name="gear" size={18} /></ToolButton>
          <ToolButton $w={14} aria-label="Options menu"><Caret $color="#222" /></ToolButton>
        </Tools>
        <DocTitle>Part1 *</DocTitle>
        <SearchBox>
          <svg width="14" height="14" viewBox="0 0 14 14" aria-hidden="true">
            <path fill="#222" d="M0 0h14v14H0z" /><path fill="none" stroke="#fff" strokeWidth="1.500" d="m3 3 4 3.500L3 10M7.500 10.500H12" />
          </svg>
          <input aria-label="Search Commands" placeholder="Search Commands" />
          <Icon name="search" size={14} />
          <Caret />
        </SearchBox>
        <Tools>
          {["user", "help", "minimize", "restore", "close"].map((n) => (
            <ToolButton key={n} $w={36} aria-label={n}><Icon name={n} /></ToolButton>
          ))}
        </Tools>
      </TitleBar>

      <Ribbon>
        <Group $w={274} $inset={5}>
          <Big icon="extrude" w={62}><Two a="Extruded" b="Boss/Base" /></Big>
          <Big icon="revolve" w={62}><Two a="Revolved" b="Boss/Base" /></Big>
          <Stack $w={140}>
            <Small icon="sweep">Swept Boss/Base</Small>
            <Small icon="loft">Lofted Boss/Base</Small>
            <Small icon="boundary">Boundary Boss/Base</Small>
          </Stack>
        </Group>
        <Group $w={270} $inset={4}>
          <Big icon="extrudeCut" w={51}><Two a="Extruded" b="Cut" /></Big>
          <Big icon="hole" w={51} caret><Two a="Hole" b="Wizard" /></Big>
          <Big icon="revolveCut" w={51}><Two a="Revolved" b="Cut" /></Big>
          <Stack $w={108}>
            <Small icon="sweepCut">Swept Cut</Small>
            <Small icon="loftCut">Lofted Cut</Small>
            <Small icon="boundary">Boundary Cut</Small>
          </Stack>
        </Group>
        <Group $w={231}>
          <Big icon="fillet" w={38} caret>Fillet</Big>
          <Big icon="pattern" w={44} caret><Two a="Linear" b="Pattern" /></Big>
          <Stack $w={64}>
            <Small icon="rib">Rib</Small>
            <Small icon="draft">Draft</Small>
            <Small icon="shell">Shell</Small>
          </Stack>
          <Stack $w={80}>
            <Small icon="wrap">Wrap</Small>
            <Small icon="intersect">Intersect</Small>
            <Small icon="mirror">Mirror</Small>
          </Stack>
        </Group>
        <Group $w={108}>
          <Big icon="geometry" w={62} caret><Two a="Reference" b="Geometry" /></Big>
          <Big icon="curves" w={44} caret>Curves</Big>
        </Group>
        <Group $w={64}>
          <Big icon="instant" w={62} on>Instant3D</Big>
        </Group>
        <RibbonEnd aria-label="Collapse ribbon"><Icon name="up" size={18} /></RibbonEnd>
      </Ribbon>

      <Body>
        <Main>
          <TabRow>
            {tabs.map(([name, w], i) => <Tab key={name} $w={w} $on={i === 0}>{name}</Tab>)}
            <DocButtons>
              {["paneLeft", "paneRight", "minimize", "restore", "close"].map((n) => (
                <button key={n} aria-label={n}><Icon name={n} /></button>
              ))}
            </DocButtons>
          </TabRow>
          <Middle>
            <Panel>
              <Grip><Dot /></Grip>
              <PanelTabs>
                <PanelTab aria-label="Feature tree"><Icon name="part" size={19} /></PanelTab>
                <PanelTab $on aria-label="Properties"><Icon name="sheet" /></PanelTab>
                <PanelTab aria-label="Configurations"><Icon name="config" /></PanelTab>
                <PanelTab aria-label="Dimensions"><Icon name="target" /></PanelTab>
                <PanelTab aria-label="Display"><Icon name="ball" /></PanelTab>
                <PanelTab aria-label="CAM"><Icon name="sheet" /></PanelTab>
                <TabArrows>
                  <button aria-label="Previous tabs"><Caret $dir="left" $color="#000" /></button>
                  <button aria-label="Next tabs"><Caret $dir="right" $color="#000" /></button>
                </TabArrows>
              </PanelTabs>
              <FeatureHead>
                <Icon name="filletBlue" />
                <h2>Fillet1</h2>
                <button aria-label="Help"><Icon name="help" size={15} /></button>
              </FeatureHead>
              <Confirm>
                <button aria-label="OK"><Icon name="check" size={16} /></button>
                <button aria-label="Cancel"><Icon name="cross" size={12} /></button>
              </Confirm>
              <Scroller>
                <Sections>
                  <Section><SectionHead><h3>Feature Type</h3><button aria-label="Expand"><Icon name="down" size={16} /></button></SectionHead></Section>
                  <Section><SectionHead><h3>Items To Fillet</h3><button aria-label="Expand"><Icon name="down" size={16} /></button></SectionHead></Section>
                  <Section $pad={10}>
                    <SectionHead><h3>Fillet Parameters</h3><button aria-label="Collapse"><Icon name="up" size={16} /></button></SectionHead>
                    <Field $h={21} $inset={31}>
                      <SelectWrap>
                        <Select aria-label="Symmetry"><option>Symmetric</option></Select>
                        <Icon name="thinDown" size={9} />
                      </SelectWrap>
                    </Field>
                    <Field $h={21} $top={9} $inset={6}>
                      <Icon name="radius" />
                      <Spin>
                        <input aria-label="Radius" defaultValue="10.00mm" />
                        <SpinButtons>
                          <button aria-label="Increase"><Caret $dir="up" $color="#000" /></button>
                          <button aria-label="Decrease"><Caret $color="#000" /></button>
                        </SpinButtons>
                      </Spin>
                    </Field>
                    <Field $top={8} $inset={31} $gap={3}>
                      <Check type="checkbox" id="multi" />
                      <label htmlFor="multi">Multi Radius Fillet</label>
                    </Field>
                    <Field $top={5}><label htmlFor="profile">Profile:</label></Field>
                    <Field $h={21} $top={8} $inset={31}>
                      <SelectWrap>
                        <Select id="profile"><option>Circular</option></Select>
                        <Icon name="thinDown" size={9} />
                      </SelectWrap>
                    </Field>
                  </Section>
                  <Section><SectionHead><h3>Setback Parameters</h3><button aria-label="Expand"><Icon name="down" size={16} /></button></SectionHead></Section>
                  <Section>
                    <SectionHead>
                      <Check type="checkbox" id="partial" />
                      <label htmlFor="partial">Partial Edge Parameters</label>
                      <button aria-label="Collapse"><Icon name="up" size={16} /></button>
                    </SectionHead>
                    <Field $h={18} $top={2} $inset={35} $gap={6}>
                      <Icon name="edge" /><EdgeList />
                    </Field>
                    <Field $top={9} $inset={33} $off><label htmlFor="start">Start condition:</label></Field>
                    <Field $h={21} $top={6} $inset={33}>
                      <SelectWrap $off>
                        <Select id="start" disabled><option>Distance Offset</option></Select>
                        <Icon name="thinDown" size={9} />
                      </SelectWrap>
                    </Field>
                    <Field $h={21} $top={7} $inset={10} $gap={2}>
                      <Icon name="radius" size={19} />
                      <Swatch />
                      <Spin>
                        <input aria-label="Offset" />
                        <SpinButtons>
                          <button aria-label="Increase"><Caret $dir="up" $color="#777" /></button>
                          <button aria-label="Decrease"><Caret /></button>
                        </SpinButtons>
                      </Spin>
                    </Field>
                  </Section>
                </Sections>
                <Track />
              </Scroller>
              <Splitter />
              <Handle aria-label="Collapse panel"><Dot /></Handle>
            </Panel>

            <Viewport>
              <Model />
              <ViewBar>
                <TreeRoot>
                  <Caret $dir="right" $color="#000" />
                  <Icon name="part" size={18} />
                  Part1 (Default) &lt;&lt;Default...
                </TreeRoot>
                {viewTools.map((n, i) => (
                  <Slot key={i} $caret={!n} aria-label={n || "menu"}>{n ? <Icon name={n} /> : <Caret />}</Slot>
                ))}
              </ViewBar>
              <Callout><span>Radius:</span><input defaultValue="10mm" /></Callout>
              <Confirmation $top={32} $right={73} $color="#3c9a12" aria-label="Accept"><Icon name="bigCheck" size={30} /></Confirmation>
              <Confirmation $top={60} $right={28} $color="#d02030" aria-label="Discard"><Icon name="flatX" size={34} /></Confirmation>
              <ViewName>*Trimetric</ViewName>
              <SideTabs>
                {sideTabs.map((n, i) => <SideTab key={n} $on={i === 0} aria-label={n}><Icon name={n} /></SideTab>)}
              </SideTabs>
            </Viewport>
          </Middle>
          <ViewTabs>
            <Pager>
              <button aria-label="First"><i /><Caret $dir="left" $color="#999" /></button>
              <button aria-label="Previous"><Caret $dir="left" $color="#999" /></button>
              <button aria-label="Next"><Caret $dir="right" $color="#999" /></button>
              <button aria-label="Last"><Caret $dir="right" $color="#999" /><i /></button>
            </Pager>
            <ViewTab $w={57} $on>Model</ViewTab>
            <ViewTab $w={68}>3D Views</ViewTab>
            <ViewTab $w={108}>Motion Study 1</ViewTab>
          </ViewTabs>
        </Main>

        <TaskPane>
          <TaskHead>
            <Icon name="chevrons" size={13} />
            <h2>3DEXPERIEN...</h2>
            <Icon name="gear" size={16} />
            <Icon name="pin" size={13} />
          </TaskHead>
          <TaskFrame>
            <Article>
              <h3>Update Available</h3>
              <p>A new update of the 3DEXPERIENCE Marketplace for SOLIDWORKS add-in is available for download: 6.34.523</p>
              <UpdateButton $primary>Get the Update</UpdateButton>
              <UpdateButton>Install Later</UpdateButton>
            </Article>
            <VBar><Caret as="i" $dir="up" $color="#a0a0a0" /><Caret as="i" $color="#444" /></VBar>
            <HBar><Caret as="i" $dir="left" $color="#a0a0a0" /><Caret as="i" $dir="right" $color="#444" /></HBar>
            <Corner />
          </TaskFrame>
        </TaskPane>
      </Body>

      <Status>
        <span>SOLIDWORKS Premium 2024 SP1.0</span>
        <small>MMGS</small>
        <Caret as="i" $dir="up" />
        <Icon name="tags" size={18} />
      </Status>
    </Shell>
  );
}
